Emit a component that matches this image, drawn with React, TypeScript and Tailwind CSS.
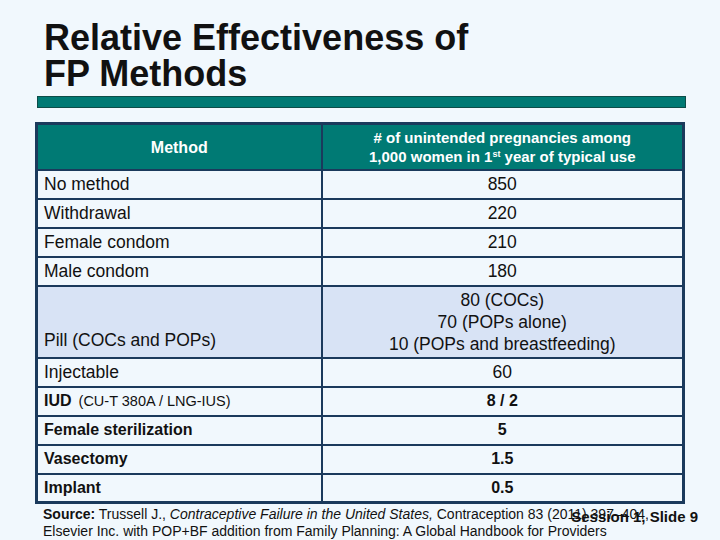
const rows: { label: string; value: string; strong?: boolean }[] = [
  { label: "No method", value: "850" },
  { label: "Withdrawal", value: "220" },
  { label: "Female condom", value: "210" },
  { label: "Male condom", value: "180" },
];

const lowerRows: { label: string; value: string; strong?: boolean }[] = [
  { label: "Female sterilization", value: "5", strong: true },
  { label: "Vasectomy", value: "1.5", strong: true },
  { label: "Implant", value: "0.5", strong: true },
];

function Row({ label, value, strong }: { label: string; value: string; strong?: boolean }) {
  return (
    <tr className="h-[29px]">
      <td className={`border-2 border-[#1b3a5c] pl-[6px] ${strong ? "font-bold text-[16px]" : "text-[17.5px]"}`}>
        {label}
      </td>
      <td className={`border-2 border-[#1b3a5c] text-center ${strong ? "font-bold text-[16px]" : "text-[17.5px]"}`}>
        {value}
      </td>
    </tr>
  );
}

export default function App() {
  return (
    <div
      className="relative w-[720px] h-[540px] bg-[#f1f8fd] text-[#111] overflow-hidden"
      style={{ fontFamily: '"Liberation Sans", Arial, sans-serif' }}
    >
      <div className="pl-[44px] pt-[20px]">
        <h1 className="text-[36px] leading-[36px] font-bold">
          Relative Effectiveness of
          <br />
          FP Methods
        </h1>
      </div>

      <div className="ml-[37px] mt-[4px] w-[649px] h-[12px] bg-[#007a74] border border-[#0d4d48]" />

      <table className="ml-[35px] mt-[14px] w-[650px] border-collapse border-[3px] border-[#1b3a5c] bg-[#f1f8fd] table-fixed">
        <colgroup>
          <col className="w-[285px]" />
          <col />
        </colgroup>
        <thead>
          <tr className="h-[46px] bg-[#007a74] text-white">
            <th className="border-2 border-[#1b3a5c] text-[16px] font-bold pt-[2px]">Method</th>
            <th className="border-2 border-[#1b3a5c] text-[15px] font-bold leading-[19px]">
              # of unintended pregnancies among
              <br />
              1,000 women in 1<sup className="text-[9px]">st</sup> year of typical use
            </th>
          </tr>
        </thead>
        <tbody>
          {rows.map((r) => (
            <Row key={r.label} {...r} />
          ))}
          <tr className="h-[72px] bg-[#d8e3f5]">
            <td className="border-2 border-[#1b3a5c] pl-[6px] pb-[3px] align-bottom text-[17.5px]">
              Pill (COCs and POPs)
            </td>
            <td className="border-2 border-[#1b3a5c] text-center text-[17.5px] leading-[22px]">
              80 (COCs)
              <br />
              70 (POPs alone)
              <br />
              10 (POPs and breastfeeding)
            </td>
          </tr>
          <Row label="Injectable" value="60" />
          <tr className="h-[29px]">
            <td className="border-2 border-[#1b3a5c] pl-[6px]">
              <span className="text-[16px] font-bold">IUD</span>
              <span className="text-[14.5px] ml-[7px]">(CU-T 380A / LNG-IUS)</span>
            </td>
            <td className="border-2 border-[#1b3a5c] text-center text-[16px] font-bold">8 / 2</td>
          </tr>
          {lowerRows.map((r) => (
            <Row key={r.label} {...r} />
          ))}
        </tbody>
      </table>

      <div className="relative pl-[43px] pt-[2px] text-[14px] leading-[17px]">
        <p>
          <span className="font-bold">Source:</span> Trussell J.,{" "}
          <i>Contraceptive Failure in the United States,</i> Contraception 83 (2011) 397–404,
        </p>
        <p>Elsevier Inc. with POP+BF addition from Family Planning: A Global Handbook for Providers</p>
        <div className="absolute right-[22px] top-[4px] text-[15px] font-bold">Session 1, Slide 9</div>
      </div>
    </div>
  );
}
